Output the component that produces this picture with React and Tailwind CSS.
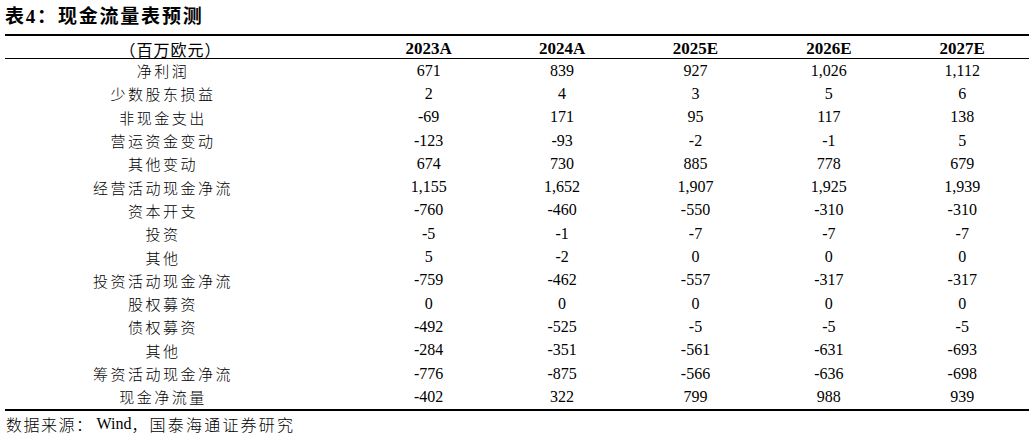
import React from "react";

const years = ["2023A", "2024A", "2025E", "2026E", "2027E"];

const rows = [
  ["净利润", ["671", "839", "927", "1,026", "1,112"]],
  ["少数股东损益", ["2", "4", "3", "5", "6"]],
  ["非现金支出", ["-69", "171", "95", "117", "138"]],
  ["营运资金变动", ["-123", "-93", "-2", "-1", "5"]],
  ["其他变动", ["674", "730", "885", "778", "679"]],
  ["经营活动现金净流", ["1,155", "1,652", "1,907", "1,925", "1,939"]],
  ["资本开支", ["-760", "-460", "-550", "-310", "-310"]],
  ["投资", ["-5", "-1", "-7", "-7", "-7"]],
  ["其他", ["5", "-2", "0", "0", "0"]],
  ["投资活动现金净流", ["-759", "-462", "-557", "-317", "-317"]],
  ["股权募资", ["0", "0", "0", "0", "0"]],
  ["债权募资", ["-492", "-525", "-5", "-5", "-5"]],
  ["其他", ["-284", "-351", "-561", "-631", "-693"]],
  ["筹资活动现金净流", ["-776", "-875", "-566", "-636", "-698"]],
  ["现金净流量", ["-402", "322", "799", "988", "939"]],
];

const serif = "font-['Liberation_Serif','Noto_Sans_CJK_SC',serif]";
const grid = "grid grid-cols-[357px_repeat(5,133.4px)]";

export default function App() {
  return (
    <div className={`w-[1031px] h-[440px] bg-white text-black ${serif}`}>
      <div className="ml-[5px] w-[1024px]">
        <div className="h-[34px] pt-[6px] text-[19px] font-bold leading-[22px] tracking-[1.8px]">
          表4：现金流量表预测
        </div>
        <div className="border-t-[2px] border-black" />
        <div className={`${grid} h-[23px] items-center border-b border-black`}>
          <div className="pr-[26px] text-center text-[16px] tracking-[1px] font-['Noto_Sans_CJK_SC',sans-serif]">
            （百万欧元）
          </div>
          {years.map((y) => (
            <div key={y} className="text-center text-[17px] font-bold">
              {y}
            </div>
          ))}
        </div>
        {rows.map(([label, vals], i) => (
          <div key={i} className={`${grid} h-[23.3px] items-center`}>
            <div className="pr-[41px] text-center text-[15px] leading-none tracking-[2.5px] font-['Noto_Sans_CJK_SC',sans-serif] font-light">
              {label}
            </div>
            {vals.map((v, j) => (
              <div key={j} className="text-center text-[16px] leading-none">
                {v}
              </div>
            ))}
          </div>
        ))}
        <div className="mt-[1px] border-t-[2px] border-black" />
        <div className="flex h-[26px] items-center pl-[1px] text-[16px] leading-none">
          <span className="font-['Noto_Sans_CJK_SC',sans-serif] font-light tracking-[1.5px]">数据来源：</span>
          <span className="ml-[3px]">Wind</span>
          <span className="font-['Noto_Sans_CJK_SC',sans-serif] font-light tracking-[2.2px]">，国泰海通证券研究</span>
        </div>
      </div>
    </div>
  );
}
